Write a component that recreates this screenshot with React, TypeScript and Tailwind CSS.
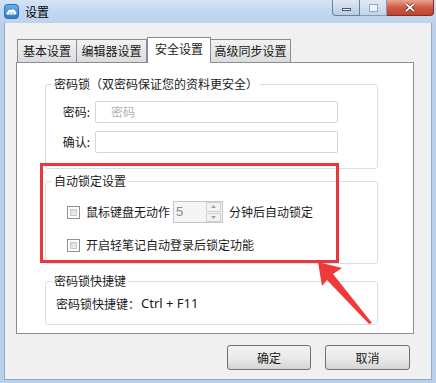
import React from "react";

const font = { fontFamily: '"Noto Sans CJK SC", "Microsoft YaHei", sans-serif' };

function Checkbox() {
  return (
    <div className="w-[13px] h-[13px] border border-[#8e8f8f] bg-white p-[2px] shrink-0">
      <div className="w-full h-full bg-gradient-to-br from-[#d9d9d9] to-[#f4f4f4] border border-[#c6c6c6]" />
    </div>
  );
}

function GroupBox({ title, className, children }: { title: string; className?: string; children?: React.ReactNode }) {
  return (
    <div className={"relative border border-[#d5dfe5] rounded-[3px] " + (className || "")}>
      <div className="absolute left-[6px] top-[-10px] bg-white px-[2px] text-[12px] leading-[18px] text-[#1a1a1a]">{title}</div>
      {children}
    </div>
  );
}

export default function App() {
  return (
    <div className="relative w-[436px] h-[383px] bg-[#b9d1ea] overflow-hidden text-[12px] text-[#1a1a1a]" style={font}>
      {/* title bar */}
      <div className="relative h-[23px] bg-gradient-to-b from-[#d3e4f6] via-[#c2d8f0] to-[#bcd3ec] flex items-center">
        <svg width="15" height="15" viewBox="0 0 15 15" className="ml-[4px]">
          <defs>
            <linearGradient id="ig" x1="0" y1="0" x2="0" y2="1">
              <stop offset="0" stopColor="#6cb0ea" />
              <stop offset="1" stopColor="#2a78c9" />
            </linearGradient>
          </defs>
          <rect x="0.5" y="0.5" width="14" height="14" rx="3" fill="url(#ig)" stroke="#2f6fb2" />
          <path d="M3.2 10.5 C2 10.5 2 8 3.6 8 C3.8 6 6 5.2 7.3 6.3 C8.3 4.6 11.2 5.2 11.1 7.6 C12.8 7.6 12.9 10.5 11.2 10.5 Z" fill="#fff" />
          <circle cx="6" cy="9" r="0.7" fill="#2a78c9" />
          <circle cx="9" cy="9" r="0.7" fill="#2a78c9" />
        </svg>
        <span className="ml-[6px] text-[12px] text-black">设置</span>
        <div className="absolute right-[2px] top-0 flex">
          <div className="w-[28px] h-[16px] border border-[#6b7f99] border-t-0 rounded-bl-[4px] bg-gradient-to-b from-[#dfe9f5] to-[#b9cbe3] flex items-center justify-center">
            <div className="w-[9px] h-[3px] border border-[#4a5566] bg-white mt-[4px]" />
          </div>
          <div className="w-[27px] h-[16px] border-b border-r border-[#8a9bb3] bg-gradient-to-b from-[#dfe9f5] to-[#c3d3e8] flex items-center justify-center">
            <div className="w-[9px] h-[8px] border border-[#9aa8ba] bg-white/60" />
          </div>
          <div className="w-[47px] h-[16px] border border-l-0 border-t-0 border-[#7a3030] rounded-br-[4px] bg-gradient-to-b from-[#e8a493] via-[#cf5a43] to-[#c0432d] flex items-center justify-center">
            <svg width="10" height="9" viewBox="0 0 10 9">
              <path d="M1 1 L9 8 M9 1 L1 8" stroke="#5a1a10" strokeWidth="3" />
              <path d="M1 1 L9 8 M9 1 L1 8" stroke="#ffffff" strokeWidth="1.8" />
            </svg>
          </div>
        </div>
      </div>

      {/* client */}
      <div className="mx-[4px] h-[357px] bg-[#f0f0f0] border-l border-r border-b border-[#8fa9c8] pt-[14px]">
        {/* tabs */}
        <div className="flex items-end h-[25px] pl-[12px]">
          <div className="w-[60px] h-[23px] border border-[#898c95] border-b-0 bg-gradient-to-b from-[#f2f2f2] to-[#dcdcdc] flex items-center justify-center">基本设置</div>
          <div className="w-[70px] h-[23px] border border-[#898c95] border-b-0 border-l-0 bg-gradient-to-b from-[#f2f2f2] to-[#dcdcdc] flex items-center justify-center">编辑器设置</div>
          <div className="relative z-10 w-[64px] h-[26px] -mb-[1px] border border-[#898c95] border-b-0 bg-white flex items-start justify-center pt-[2px]">安全设置</div>
          <div className="w-[80px] h-[23px] border border-[#898c95] border-b-0 border-l-0 bg-gradient-to-b from-[#f2f2f2] to-[#dcdcdc] flex items-center justify-center">高级同步设置</div>
        </div>
        {/* panel */}
        <div className="ml-[11px] w-[398px] h-[272px] border border-[#898c95] bg-white pl-[28px] pr-[35px] pt-[21px]">
          <GroupBox title="密码锁（双密码保证您的资料更安全）" className="h-[85px] pt-[16px]">
            <div className="flex items-center h-[22px]">
              <span className="w-[44px] text-right">密码:</span>
              <div className="ml-[5px] w-[243px] h-[22px] border border-[#d6d6d6] rounded-[2px] bg-white flex items-center pl-[15px] text-[#b0b0b0]">密码</div>
            </div>
            <div className="flex items-center h-[22px] mt-[8px]">
              <span className="w-[44px] text-right">确认:</span>
              <div className="ml-[5px] w-[243px] h-[22px] border border-[#d6d6d6] rounded-[2px] bg-white" />
            </div>
          </GroupBox>

          <GroupBox title="自动锁定设置" className="mt-[12px] h-[83px] pt-[19px] pl-[21px]">
            <div className="flex items-center h-[22px]">
              <Checkbox />
              <span className="ml-[6px]">鼠标键盘无动作</span>
              <div className="ml-[3px] w-[50px] h-[22px] border border-[#c5c5c5] bg-[#f4f4f4] flex items-center">
                <span className="ml-[2px] flex-1 text-[#8a8a8a] text-[13px]" style={{ fontFamily: '"Liberation Sans", sans-serif' }}>5</span>
                <div className="w-[15px] h-[20px] mr-[1px] flex flex-col gap-[1px]">
                  <div className="flex-1 border border-[#d0d0d0] rounded-[1px] bg-[#f2f2f2] flex items-center justify-center">
                    <svg width="5" height="3" viewBox="0 0 5 3"><path d="M0 3 L2.5 0 L5 3 Z" fill="#a5a5a5" /></svg>
                  </div>
                  <div className="flex-1 border border-[#d0d0d0] rounded-[1px] bg-[#f2f2f2] flex items-center justify-center">
                    <svg width="5" height="3" viewBox="0 0 5 3"><path d="M0 0 L2.5 3 L5 0 Z" fill="#a5a5a5" /></svg>
                  </div>
                </div>
              </div>
              <span className="ml-[6px]">分钟后自动锁定</span>
            </div>
            <div className="flex items-center h-[22px] mt-[11px]">
              <Checkbox />
              <span className="ml-[6px]">开启轻笔记自动登录后锁定功能</span>
            </div>
          </GroupBox>

          <GroupBox title="密码锁快捷键" className="mt-[17px] h-[44px] pt-[13px] pl-[10px]">
            <div className="h-[18px] flex items-center">
              <span>密码锁快捷键：</span>
              <span className="ml-[1px] text-[13px]" style={{ fontFamily: '"Noto Sans", "Liberation Sans", sans-serif' }}>Ctrl + F11</span>
            </div>
          </GroupBox>
        </div>
        {/* buttons */}
        <div className="flex justify-end gap-[14px] mt-[11px] pr-[21px]">
          <div className="w-[84px] h-[25px] border border-[#707070] rounded-[3px] bg-gradient-to-b from-[#f2f2f2] via-[#ebebeb] to-[#d5d5d5] flex items-center justify-center">确定</div>
          <div className="w-[85px] h-[25px] border border-[#707070] rounded-[3px] bg-gradient-to-b from-[#f2f2f2] via-[#ebebeb] to-[#d5d5d5] flex items-center justify-center">取消</div>
        </div>
      </div>

      {/* annotation overlays */}
      <div className="absolute left-[40px] top-[163px] w-[299px] h-[100px] border-[3px] border-[#e8383d] pointer-events-none" />
      <svg className="absolute left-0 top-0 pointer-events-none" width="436" height="383" viewBox="0 0 436 383">
        <polygon points="318,262 342,268 333,274 372,323 369,324 327,280 322,286" fill="#f03a3a" />
      </svg>
    </div>
  );
}
